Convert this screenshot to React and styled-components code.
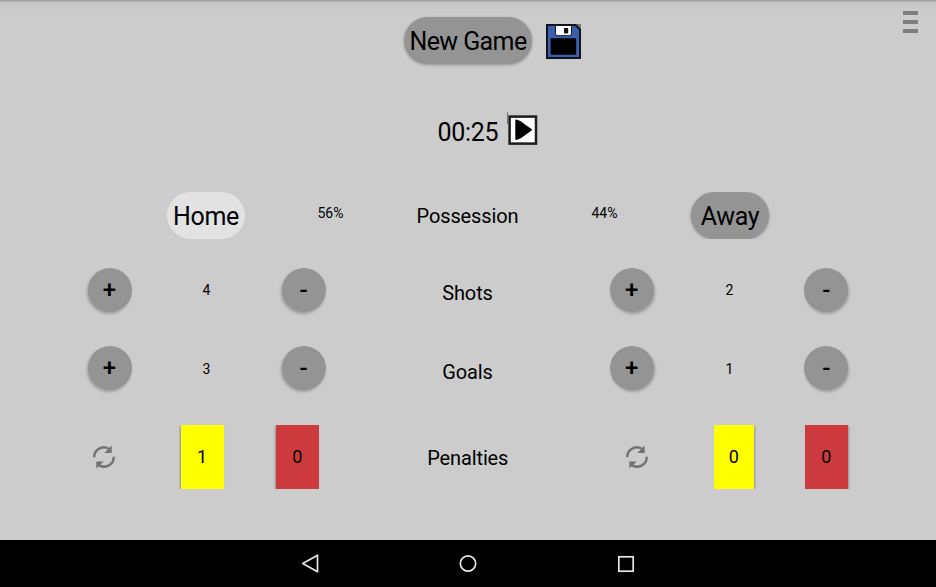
import React from "react";
import styled, { createGlobalStyle } from "styled-components";

const GlobalStyle = createGlobalStyle`
  *, *::before, *::after { box-sizing: border-box; }
  body { margin: 0; background: #cccccc; }
  button { font: inherit; color: inherit; border: 0; padding: 0; }
`;

const Screen = styled.div`
  width: 936px;
  height: 587px;
  position: relative;
  display: flex;
  flex-direction: column;
  overflow: hidden;
  background: linear-gradient(#9f9f9f 0, #a5a5a5 1px, #c2c2c2 2px, #cccccc 10px);
  color: #000;
  font-family: Roboto, "Liberation Sans", sans-serif;
`;

const Header = styled.header`
  display: flex;
  align-items: flex-start;
  gap: 14px;
  height: 65px;
  padding: 17px 0 0 404px;
`;

const Pill = styled.button`
  width: ${(p) => p.$width};
  height: 47px;
  padding-top: 2px;
  border-radius: 24px;
  font-size: 25px;
  letter-spacing: ${(p) => p.$tracking || "-0.3px"};
  line-height: 30px;
  white-space: nowrap;
  background: ${(p) => (p.$selected ? "#e2e2e2" : "#949494")};
  box-shadow: ${(p) => (p.$raised ? "0 1px 3px rgba(0,0,0,.3)" : "none")};
`;

const IconButton = styled.button`
  display: block;
  background: transparent;
  margin-top: ${(p) => p.$drop || "0"};
  line-height: 0;
  svg { display: block; }
`;

const MenuButton = styled.button`
  position: absolute;
  top: 11px;
  right: 18px;
  width: 15px;
  height: 22px;
  display: flex;
  flex-direction: column;
  justify-content: space-between;
  background: transparent;
`;

const MenuBar = styled.span`
  display: block;
  width: 15px;
  height: 4px;
  background: #7e7e80;
`;

const TimerRow = styled.div`
  display: flex;
  align-items: flex-start;
  height: 127px;
  padding: 46px 0 0 437.5px;
`;

const Clock = styled.span`
  width: 69.5px;
  margin-top: 7px;
  font-size: 25px;
  letter-spacing: -0.3px;
  line-height: 30px;
`;

const Caret = styled.i`
  width: 1px;
  height: 12px;
  margin-top: 1px;
  background: #777;
`;

const Row = styled.div`
  display: grid;
  grid-template-columns: ${(p) => p.$columns};
  height: ${(p) => p.$height};
  padding-left: ${(p) => p.$left};
  align-items: start;
  justify-items: center;
`;

const Label = styled.span`
  margin-top: ${(p) => p.$drop};
  font-size: 20px;
  letter-spacing: -0.12px;
  line-height: 24px;
`;

const Value = styled.span`
  margin-top: ${(p) => p.$drop};
  font-size: 14px;
  line-height: 18px;
`;

const PillFrame = styled.div`
  height: 47px;
  padding: 0 6px;
  overflow: hidden;
`;

const Round = styled.button`
  width: 44px;
  height: 44px;
  border-radius: 50%;
  background: #949494;
  font-size: 24px;
  font-weight: 500;
  line-height: 44px;
  box-shadow: ${(p) => p.$shade}px 2px 3px rgba(0, 0, 0, 0.24);
`;

const CardFrame = styled.div`
  height: 64px;
  padding: 0 5px;
  overflow: hidden;
`;

const Card = styled.button`
  display: block;
  width: ${(p) => p.$width};
  height: 64px;
  background: ${(p) => p.$tone};
  font-size: 18px;
  line-height: 64px;
  box-shadow: ${(p) => p.$shade}px 1px 2px rgba(0, 0, 0, 0.28);
`;

const NavBar = styled.nav`
  display: flex;
  justify-content: center;
  gap: 138px;
  height: 47px;
  margin-top: auto;
  padding-top: 13px;
  background: #000;
  svg { width: 20px; height: 21px; fill: none; stroke: #e6e6e6; stroke-width: 1.7; }
`;

const SaveIcon = () => (
  <svg width="35" height="35" viewBox="0 0 35 35">
    <path d="M0 0h35v35H0z" fill="#777" />
    <path d="M1 1h28.5l4.5 4.5V34H1z" fill="#3b5fac" stroke="#10131a" strokeWidth="2" />
    <path d="M9.5 1.5h16v8q0 2.2-2.2 2.2H11.7q-2.2 0-2.2-2.2z" fill="#fff" stroke="#151515" />
    <rect x="18" y="4" width="4.2" height="5.4" rx="0.8" fill="#111" />
    <rect x="4.6" y="14.2" width="25.6" height="16.6" rx="1" fill="#000" />
  </svg>
);

const PlayIcon = () => (
  <svg width="30" height="31" viewBox="0 0 30 31">
    <rect x="1.6" y="1.6" width="26.4" height="27" fill="#fff" stroke="#1c1c1c" strokeWidth="2.5" />
    <path d="M8.3 5.5q4 .8 8.4 5l6.3 4.3-6.3 4.4Q12.3 23 8.3 24z" fill="#000" stroke="#000" strokeWidth="2" strokeLinejoin="round" />
  </svg>
);

const RefreshIcon = () => (
  <svg width="22" height="24" viewBox="0 0 22 24">
    <g fill="none" stroke="#727272" strokeWidth="2.4">
      <path d="M1.3 12.3A9.6 9.6 0 0 1 17 4.5" />
      <path d="M20.7 11.7A9.6 9.6 0 0 1 5 19.5" />
    </g>
    <path d="M18.7 0.6V8h-7.4zM3.3 23.4V16.5h7.4z" fill="#727272" />
  </svg>
);

const STAT_COLUMNS = "97px 97px 97px 231px 97.4px 98px 96px";
const POSSESSION_COLUMNS = "90px 159px 115px 159px 92px";
const PENALTY_COLUMNS = "98px 98px 92.5px 248.5px 90px 103.8px 81px";

function Counter({ value, shade, drop }) {
  return (
    <>
      <Round $shade={shade}>+</Round>
      <Value $drop={drop}>{value}</Value>
      <Round $shade={shade}>-</Round>
    </>
  );
}

function StatRow({ label, home, away, height, drop }) {
  return (
    <Row $columns={STAT_COLUMNS} $left="61px" $height={height}>
      <Counter value={home} shade={-1} drop={drop} />
      <Label $drop={drop}>{label}</Label>
      <Counter value={away} shade={1} drop={drop} />
    </Row>
  );
}

function Penalties({ yellow, red, yellowWidth, shade }) {
  return (
    <>
      <IconButton $drop="20px" aria-label="Reset cards"><RefreshIcon /></IconButton>
      <CardFrame><Card $width={yellowWidth} $tone="#ffff00" $shade={shade}>{yellow}</Card></CardFrame>
      <CardFrame><Card $width="43px" $tone="#cc3a3e" $shade={shade}>{red}</Card></CardFrame>
    </>
  );
}

export default function App() {
  return (
    <Screen>
      <GlobalStyle />
      <Header>
        <Pill $width="128px" $tracking="-0.6px" $raised>New Game</Pill>
        <IconButton $drop="7px" aria-label="Save"><SaveIcon /></IconButton>
      </Header>
      <MenuButton aria-label="Menu"><MenuBar /><MenuBar /><MenuBar /></MenuButton>

      <TimerRow>
        <Clock>00:25</Clock>
        <Caret />
        <IconButton $drop="4px" aria-label="Play"><PlayIcon /></IconButton>
      </TimerRow>

      <Row $columns={POSSESSION_COLUMNS} $left="161px" $height="76px">
        <Pill $width="78px" $selected>Home</Pill>
        <Value $drop="12px">56%</Value>
        <Label $drop="12px">Possession</Label>
        <Value $drop="12px">44%</Value>
        <PillFrame><Pill $width="78px" $raised>Away</Pill></PillFrame>
      </Row>

      <StatRow label="Shots" home={4} away={2} height="78px" drop="13px" />
      <StatRow label="Goals" home={3} away={1} height="79px" drop="14px" />

      <Row $columns={PENALTY_COLUMNS} $left="55px" $height="65px">
        <Penalties yellow={1} red={0} yellowWidth="43px" shade={-1} />
        <Label $drop="21px">Penalties</Label>
        <Penalties yellow={0} red={0} yellowWidth="40px" shade={1} />
      </Row>

      <NavBar>
        <svg viewBox="0 0 20 21"><path d="M17.5 2.2v16.6L2.8 10.5z" strokeLinejoin="round" /></svg>
        <svg viewBox="0 0 20 21"><circle cx="10" cy="10.5" r="7.7" /></svg>
        <svg viewBox="0 0 20 21"><rect x="2.8" y="3.8" width="14.4" height="14.4" /></svg>
      </NavBar>
    </Screen>
  );
}
